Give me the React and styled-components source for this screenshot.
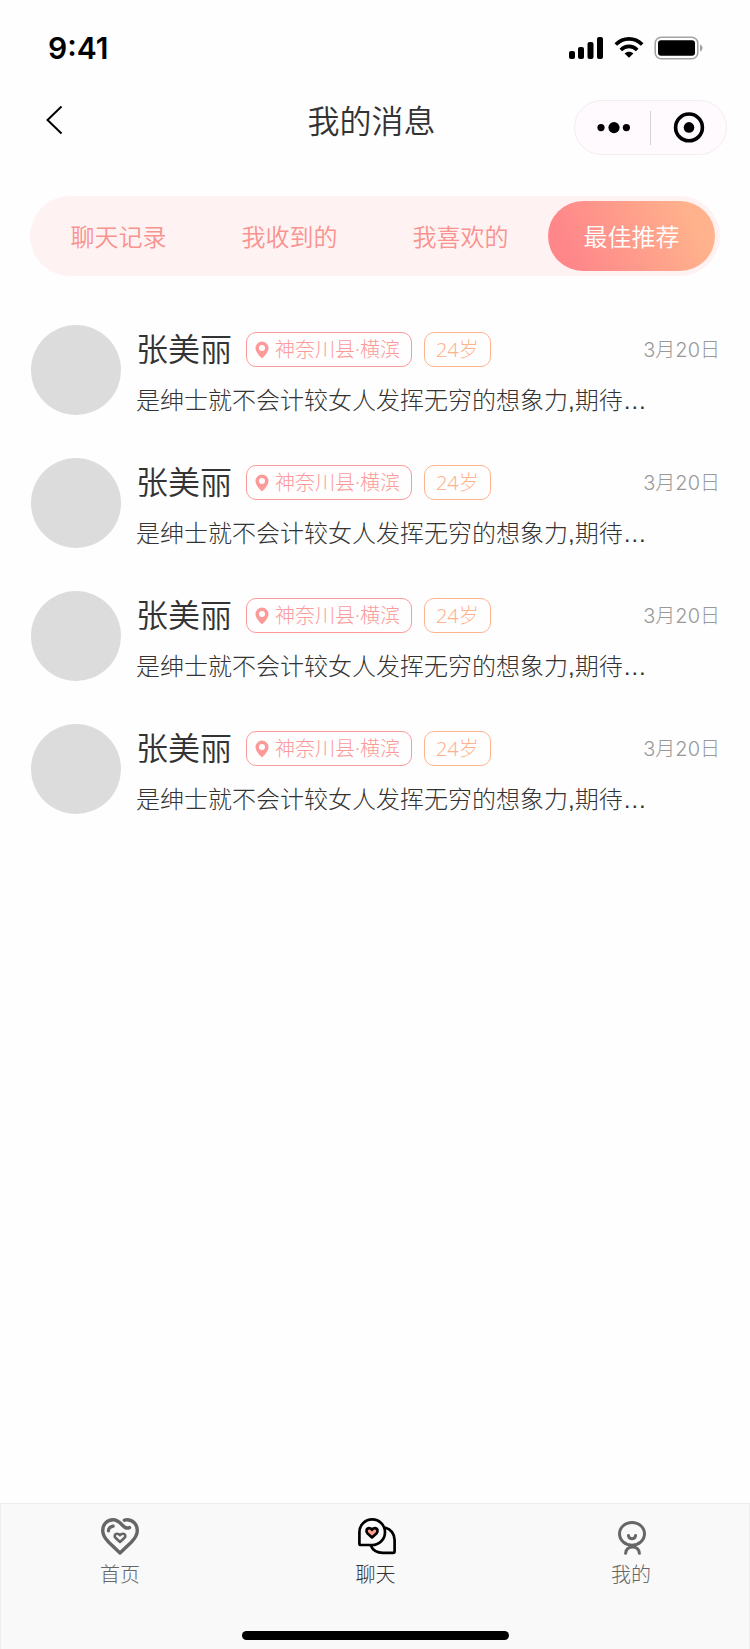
import React, { useState } from 'react'
import styled, { createGlobalStyle } from 'styled-components'

const TABS = ['聊天记录', '我收到的', '我喜欢的', '最佳推荐']

const MESSAGES = [1, 2, 3, 4].map((id) => ({
   id,
   name: '张美丽',
   place: '神奈川县·横滨',
   age: '24岁',
   date: '3月20日',
   text: '是绅士就不会计较女人发挥无穷的想象力,期待…',
}))

const SignalIcon = () => (
   <svg width="35" height="24" viewBox="1 0 35 24">
      <rect x="1" y="15" width="6" height="8" rx="2" />
      <rect x="10" y="11" width="6" height="12" rx="2" />
      <rect x="19.5" y="6" width="6" height="17" rx="2" />
      <rect x="29" y="1" width="6" height="22" rx="2" />
   </svg>
)

const WifiIcon = () => (
   <svg width="30" height="24" viewBox="0 0 30 24" fill="none" stroke="#000" strokeWidth="3.6">
      <path d="M1.8 8.6C9.2 1 20.8 1 28.2 8.6" />
      <path d="M6.8 14C11.6 9.2 18.4 9.2 23.2 14" />
      <path d="M10.6 17.6C13.2 15.2 16.8 15.2 19.4 17.6L15 21.8Z" fill="#000" stroke="none" />
   </svg>
)

const BatteryIcon = () => (
   <svg width="50" height="24" viewBox="0 0 50 24">
      <rect x="1.2" y="1.2" width="42.6" height="21.6" rx="6" fill="none" stroke="#a3a3a3" strokeWidth="1.6" />
      <rect x="4" y="4.2" width="37" height="15.6" rx="3" />
      <path d="M46 8.5C49.4 9.6 49.4 14.4 46 15.5Z" fill="#a3a3a3" />
   </svg>
)

const BackIcon = () => (
   <svg width="18" height="32" viewBox="0 0 18 32" fill="none" stroke="#000" strokeWidth="2">
      <path d="M15.5 2.5L1.5 16L15.5 29.5" />
   </svg>
)

const MoreIcon = () => (
   <svg width="34" height="32" viewBox="0 0 34 32">
      <circle cx="5" cy="15.6" r="3.6" />
      <circle cx="18" cy="15.6" r="5.6" />
      <circle cx="30.4" cy="15.6" r="3.6" />
   </svg>
)

const TargetIcon = () => (
   <svg width="32" height="32" viewBox="0 0 32 32">
      <circle cx="16" cy="15.4" r="13.4" fill="none" stroke="#000" strokeWidth="3.6" />
      <circle cx="16" cy="15.4" r="5.3" />
   </svg>
)

const PinIcon = () => (
   <svg width="14" height="18" viewBox="0 0 14 18" fill="#fc9a9a">
      <path
         fillRule="evenodd"
         d="M7 0.5A6.5 6.5 0 0 1 13.5 7C13.5 10.8 10 14.6 7 17.5C4 14.6 0.5 10.8 0.5 7A6.5 6.5 0 0 1 7 0.5ZM7 4A3 3 0 1 0 7 10A3 3 0 1 0 7 4Z"
      />
   </svg>
)

const HomeIcon = () => (
   <svg width="40" height="40" viewBox="0 0 40 40" fill="none" stroke="#666" strokeLinecap="round" strokeLinejoin="round">
      <path
         strokeWidth="3.4"
         d="M29.5 11.5C27 13 24.4 11.4 22.2 9C19 5.4 16.5 3.8 13 3.8C7 3.8 2.7 8.5 2.7 14.5C2.7 20 6 23.5 9 26.5L20 37L31 26.5C34 23.5 37.3 20 37.3 14.5C37.3 8.5 33 3.8 27 3.8C26 3.8 25 4 24.4 4.3"
      />
      <path strokeWidth="3.2" d="M8.4 15C8.6 12.5 10.6 10.6 13.2 10.2" />
      <path
         strokeWidth="2.6"
         d="M20 26L15.5 21.8C13.8 20 15 17.7 17 17.7C18.5 17.7 19.5 18.5 20 19.2C20.5 18.5 21.5 17.7 23 17.7C25 17.7 26.2 20 24.5 21.8Z"
      />
   </svg>
)

const ChatIcon = () => (
   <svg width="40" height="40" viewBox="0 0 40 40" fill="none" stroke="#000" strokeWidth="2.7" strokeLinecap="round" strokeLinejoin="round">
      <path d="M29.5 11.8C34.8 13.2 38.6 18 38.6 24V35.2Q38.6 36.8 37 36.8H27C21 36.8 16.6 34 14.8 29.5" />
      <path d="M16.2 3.4A12.8 12.8 0 0 1 16.2 29H5Q3.4 29 3.4 27.4V16.2A12.8 12.8 0 0 1 16.2 3.4Z" />
      <path
         fill="#ff9f8c"
         d="M16 21.4L11.6 17.6C9.4 15.4 10.6 12.1 13.2 12.1C14.6 12.1 15.6 12.9 16 13.8C16.4 12.9 17.4 12.1 18.8 12.1C21.4 12.1 22.6 15.4 20.4 17.6Z"
      />
   </svg>
)

const ProfileIcon = () => (
   <svg width="40" height="40" viewBox="0 0 40 40" fill="none" stroke="#666" strokeWidth="3" strokeLinecap="round">
      <ellipse cx="21" cy="17.8" rx="12.5" ry="11.4" />
      <path d="M17.4 19.4C18 24 24 24 24.6 19.4" />
      <path d="M14.6 37.3C15 33.4 17.6 31 21.5 31S28 33.4 28.4 37.3" />
   </svg>
)

const NAV_ITEMS = [
   { label: '首页', href: '#home', Icon: HomeIcon },
   { label: '聊天', href: '#chat', Icon: ChatIcon, active: true },
   { label: '我的', href: '#profile', Icon: ProfileIcon },
]

const MessageItem = ({ message }) => (
   <StyledMessage>
      <Avatar />
      <MessageBody>
         <MessageTop>
            <Name>{message.name}</Name>
            <Tags>
               <Tag $color="#fc9a9a">
                  <PinIcon />
                  {message.place}
               </Tag>
               <Tag $color="#fdb48e">{message.age}</Tag>
            </Tags>
            <MessageDate>{message.date}</MessageDate>
         </MessageTop>
         <MessageText>{message.text}</MessageText>
      </MessageBody>
   </StyledMessage>
)

const App = () => {
   const [activeTab, setActiveTab] = useState(3)

   return (
      <Page>
         <GlobalStyle />
         <StatusBar>
            <Time>9:41</Time>
            <StatusIcons>
               <SignalIcon />
               <WifiIcon />
               <BatteryIcon />
            </StatusIcons>
         </StatusBar>
         <Header>
            <BackButton aria-label="返回">
               <BackIcon />
            </BackButton>
            <Title>我的消息</Title>
            <Capsule>
               <CapsuleButton aria-label="更多">
                  <MoreIcon />
               </CapsuleButton>
               <Divider />
               <CapsuleButton aria-label="关闭">
                  <TargetIcon />
               </CapsuleButton>
            </Capsule>
         </Header>
         <Tabs>
            {TABS.map((tab, index) => (
               <Tab key={tab} $active={index === activeTab} onClick={() => setActiveTab(index)}>
                  {tab}
               </Tab>
            ))}
         </Tabs>
         <MessageList>
            {MESSAGES.map((message) => (
               <MessageItem key={message.id} message={message} />
            ))}
         </MessageList>
         <Footer>
            <StyledNav>
               {NAV_ITEMS.map(({ label, href, Icon, active }) => (
                  <NavLink key={label} href={href} $active={active}>
                     <Icon />
                     {label}
                  </NavLink>
               ))}
            </StyledNav>
            <HomeIndicator />
         </Footer>
      </Page>
   )
}

export default App

const GlobalStyle = createGlobalStyle`
   * {
      box-sizing: border-box;
      margin: 0;
      padding: 0;
   }
   body {
      background: #fefefe;
      color: #333;
      font-family: 'Noto Sans CJK SC', sans-serif;
      font-weight: 300;
   }
   button {
      border: none;
      background: none;
      font: inherit;
      cursor: pointer;
   }
   svg {
      display: block;
      flex-shrink: 0;
   }
`
const Page = styled.div`
   display: flex;
   flex-direction: column;
   min-height: 100vh;
`
const StatusBar = styled.div`
   display: flex;
   justify-content: space-between;
   align-items: center;
   padding: 28px 46px 0 48px;
`
const Time = styled.span`
   color: #000;
   font-family: Inter, sans-serif;
   font-size: 30px;
   font-weight: 600;
   line-height: 40px;
`
const StatusIcons = styled.div`
   display: flex;
   align-items: center;
   gap: 10px;
`
const Header = styled.header`
   display: grid;
   grid-template-columns: 1fr auto 1fr;
   align-items: start;
   padding: 32px 23px 0 16px;
`
const BackButton = styled.button`
   display: flex;
   align-items: center;
   justify-self: start;
   height: 40px;
   padding: 0 30px;
`
const Title = styled.h1`
   font-size: 32px;
   font-weight: 350;
   line-height: 38px;
`
const Capsule = styled.div`
   display: flex;
   align-items: center;
   justify-self: end;
   width: 153px;
   height: 55px;
   border: 1px solid #f1edf1;
   border-radius: 28px;
   background: #fefafe;
`
const CapsuleButton = styled.button`
   display: flex;
   flex: 1;
   justify-content: center;
`
const Divider = styled.span`
   width: 1px;
   height: 34px;
   background: #d8d4d8;
`
const Tabs = styled.div`
   display: grid;
   grid-template-columns: repeat(4, 1fr);
   gap: 4px;
   margin: 41px 30px 0;
   padding: 5px;
   border-radius: 40px;
   background: #fff2f2;
`
const Tab = styled.button`
   height: 70px;
   padding-bottom: 2px;
   border-radius: 35px;
   background: ${({ $active }) => ($active ? 'linear-gradient(65deg, #ff878a 15%, #ffb28c 85%)' : 'none')};
   color: ${({ $active }) => ($active ? '#fff' : '#f8938f')};
   font-size: 24px;
   font-weight: 350;
`
const MessageList = styled.ul`
   display: flex;
   flex-direction: column;
   gap: 43px;
   padding: 49px 30px 49px 31px;
   list-style: none;
`
const StyledMessage = styled.li`
   display: flex;
   gap: 15px;
   height: 90px;
`
const Avatar = styled.div`
   flex-shrink: 0;
   width: 90px;
   height: 90px;
   border-radius: 50%;
   background: #dcdcdc;
`
const MessageBody = styled.div`
   flex: 1;
   min-width: 0;
   padding-top: 7px;
`
const MessageTop = styled.div`
   display: flex;
   align-items: flex-start;
   gap: 14px;
   height: 36px;
`
const Name = styled.h2`
   font-size: 32px;
   font-weight: 350;
   line-height: 30px;
`
const Tags = styled.div`
   display: flex;
   gap: 12px;
`
const Tag = styled.span`
   display: flex;
   align-items: center;
   gap: 6px;
   height: 35px;
   padding: 0 11px 0 ${({ children }) => (Array.isArray(children) ? 8 : 11)}px;
   border: 1px solid ${({ $color }) => $color};
   border-radius: 10px;
   color: ${({ $color }) => $color};
   font-family: 'Noto Sans', 'Noto Sans CJK SC', sans-serif;
   font-size: 20px;
   line-height: 32px;
   white-space: nowrap;
`
const MessageDate = styled.time`
   margin-left: auto;
   color: #999;
   font-family: Inter, 'Noto Sans CJK SC', sans-serif;
   font-size: 20px;
   line-height: 36px;
   white-space: nowrap;
`
const MessageText = styled.p`
   margin-top: 16px;
   overflow: hidden;
   font-family: 'Liberation Sans', 'Noto Sans CJK SC', sans-serif;
   font-size: 24px;
   line-height: 34px;
   white-space: nowrap;
`
const Footer = styled.footer`
   margin-top: auto;
   padding-bottom: 9px;
   border: 1px solid #eee;
   border-bottom: none;
   background: #f9f9f9;
`
const StyledNav = styled.nav`
   display: flex;
   justify-content: space-between;
   padding: 12px 78px 0 79px;
`
const NavLink = styled.a`
   display: flex;
   flex-direction: column;
   align-items: center;
   gap: 4px;
   width: 80px;
   color: ${({ $active }) => ($active ? '#333' : '#666')};
   font-size: 20px;
   line-height: 28px;
   text-decoration: none;
`
const HomeIndicator = styled.div`
   width: 267px;
   height: 9px;
   margin: 43px auto 0;
   border-radius: 5px;
   background: #000;
`
